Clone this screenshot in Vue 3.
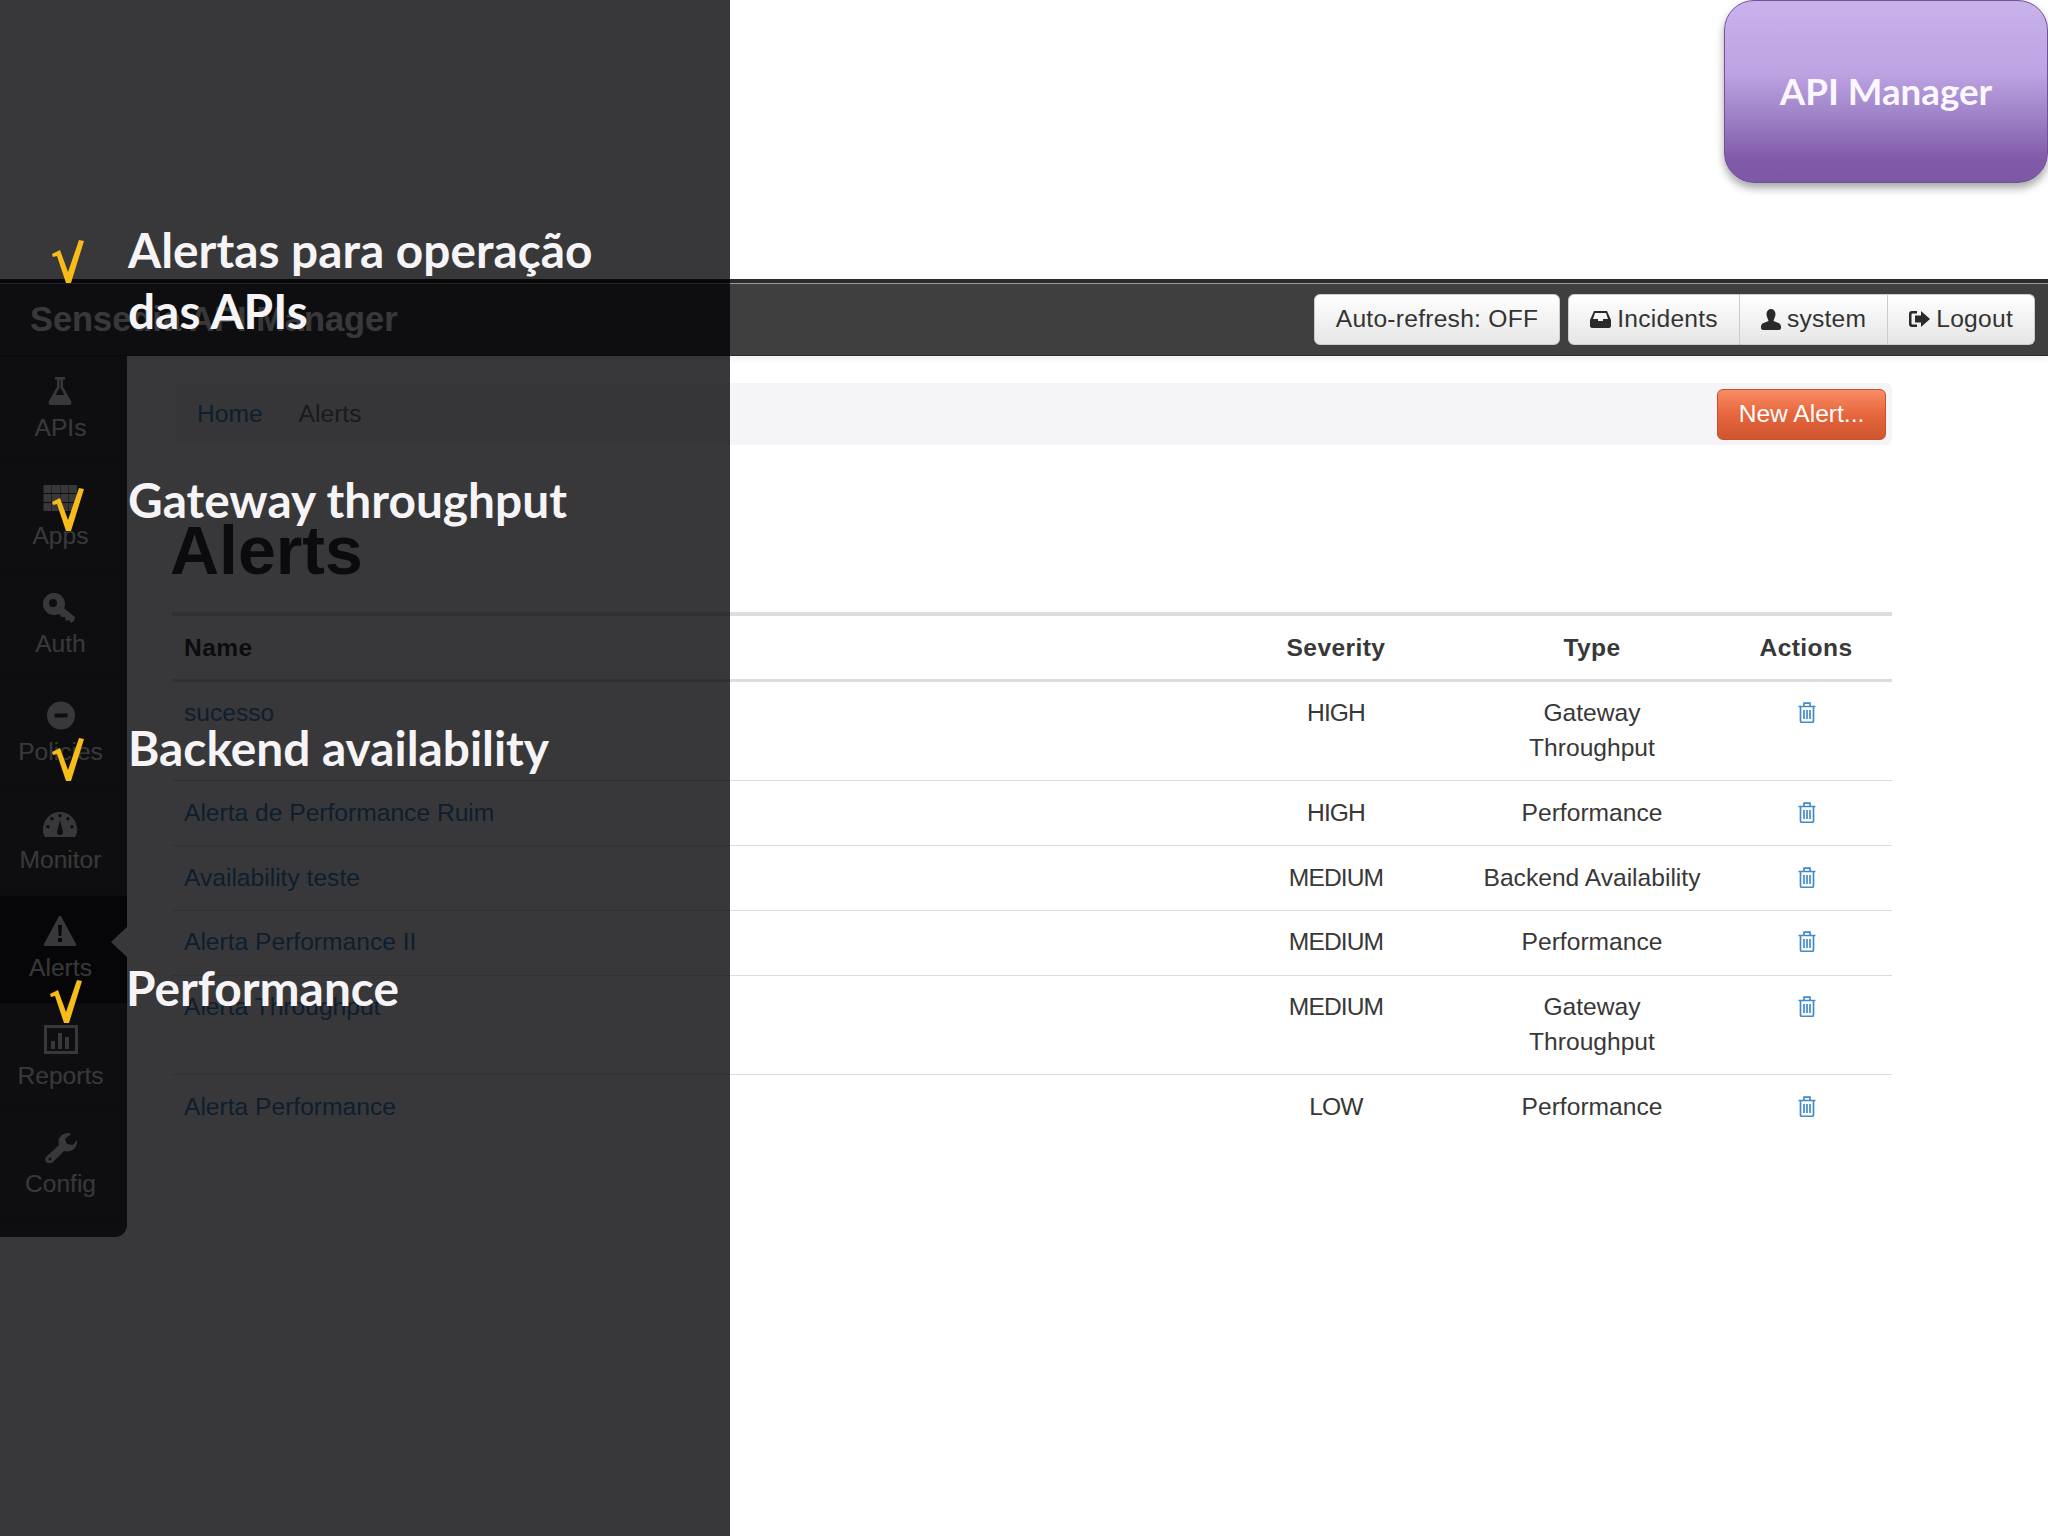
<script setup>
const icons = {
  flask: 'M12 1h10v2.500h-2V11l8 14c1 2 0 4-2 4H8c-2 0-3-2-2-4l8-14V3.500h-2z M16.500 3.500V12l-4 7h9l-4-7V3.500z',
  grid: 'M.5 1h8v8h-8z M9 1h8v8H9z M17.500 1h8v8h-8z M26 1h8v8h-8z M.5 10h8v8h-8z M9 10h8v8H9z M17.500 10h8v8h-8z M26 10h8v8h-8z M.5 19h8v8h-8z M9 19h8v8H9z M17.500 19h8v8h-8z M26 19h8v8h-8z',
  key: 'M11 1a11 11 0 1 1 0 22a11 11 0 1 1 0-22z M10 7a4 4 0 1 0 0 8a4 4 0 1 0 0-8z M18 14l14 11-1 4-3 2-2-3-3 1-1-4-3 0-5-5z',
  minus: 'M18 1.500a14 14 0 1 1 0 28a14 14 0 1 1 0-28z M11.500 13.500h13v4h-13z',
  gauge: 'M17 4C8 4 0 11 0 22c0 3 .5 5 2 7h30c1.500-2 2-4 2-7C34 11 26 4 17 4z M17 6a1.800 1.800 0 1 0 0 3.600a1.800 1.800 0 1 0 0-3.600z M9 9a1.800 1.800 0 1 0 0 3.600a1.800 1.800 0 1 0 0-3.600z M25 9a1.800 1.800 0 1 0 0 3.600a1.800 1.800 0 1 0 0-3.600z M5 17a1.800 1.800 0 1 0 0 3.600a1.800 1.800 0 1 0 0-3.600z M29 17a1.800 1.800 0 1 0 0 3.600a1.800 1.800 0 1 0 0-3.600z M14 24l3-12 3 12a3 3 0 1 1-6 0z',
  warning: 'M17 0c.7 0 1.300.6 2 2l14 26c.5 1 0 2-1 2H2c-1 0-1.500-1-1-2L15 2c.7-1.400 1.300-2 2-2z M15 9h4l-.7 11h-2.600z M15 22h4v4h-4z',
  chart: 'M1 1h34v29H1z M4 4v23h28V4z M8 17h4v8H8z M15 9h4v16h-4z M22 13h4v12h-4z',
  wrench: 'M3 25L16 13C14 7 18 1 26 1l2 1-6 5 2 5 6 1 4-5c1 8-6 13-13 11L9 31c-2 1-5 0-6-1s-1-4 0-5z M7 25.500a1.500 1.500 0 1 0 0 3a1.500 1.500 0 1 0 0-3z',
}

const menu = [
  { label: 'APIs', icon: 'flask' },
  { label: 'Apps', icon: 'grid' },
  { label: 'Auth', icon: 'key', rule: 'nonzero' },
  { label: 'Policies', icon: 'minus' },
  { label: 'Monitor', icon: 'gauge' },
  { label: 'Alerts', icon: 'warning', active: true },
  { label: 'Reports', icon: 'chart' },
  { label: 'Config', icon: 'wrench' },
]

const alerts = [
  { name: 'sucesso', severity: 'HIGH', type: 'Gateway\nThroughput' },
  { name: 'Alerta de Performance Ruim', severity: 'HIGH', type: 'Performance' },
  { name: 'Availability teste', severity: 'MEDIUM', type: 'Backend Availability' },
  { name: 'Alerta Performance II', severity: 'MEDIUM', type: 'Performance' },
  { name: 'Alerta Throughput', severity: 'MEDIUM', type: 'Gateway\nThroughput' },
  { name: 'Alerta Performance', severity: 'LOW', type: 'Performance' },
]

const notes = [
  { text: 'Alertas para operação\ndas APIs', cls: 'n1' },
  { text: 'Gateway throughput', cls: 'n2' },
  { text: 'Backend availability', cls: 'n3' },
  { text: 'Performance', cls: 'n4' },
]
</script>

<template>
  <div class="page">
    <div class="top">
      <div class="badge">API Manager</div>
    </div>

    <header class="navbar">
      <span class="brand">Sensedia API Manager</span>
      <div class="nav-actions">
        <button class="btn">Auto-refresh: OFF</button>
        <div class="btn-group">
          <button class="btn">
            <svg width="21" height="17" viewBox="0 0 21 17"><path fill-rule="evenodd" d="M4 0h13l4 9v6c0 1-1 2-2 2H2c-1 0-2-1-2-2V9z M5 2L3 8h5v2h5V8h5l-2-6z" /></svg>
            Incidents
          </button>
          <button class="btn">
            <svg width="20" height="21" viewBox="0 0 20 21"><path d="M10 0c2.500 0 4.500 2 4.500 5 0 2-1 4-1.500 5.500l-.5 1.500 5 2c1.500.6 2.500 2 2.500 3.500V19c0 1-1 2-2 2H2c-1 0-2-1-2-2v-1.500c0-1.500 1-2.900 2.500-3.500l5-2-.5-1.500C6.500 9 5.500 7 5.500 5c0-3 2-5 4.500-5z" /></svg>
            system
          </button>
          <button class="btn">
            <svg width="21" height="16" viewBox="0 0 21 16"><path d="M0 3a3 3 0 0 1 3-3h5v2.500H3.500a1 1 0 0 0-1 1v9a1 1 0 0 0 1 1H8V16H3a3 3 0 0 1-3-3z M6 4.500h6V0l9 8-9 8v-4.500H6z" /></svg>
            Logout
          </button>
        </div>
      </div>
    </header>

    <div class="body">
      <aside class="sidebar">
        <a v-for="item in menu" :key="item.label" class="side-item" :class="{ active: item.active }">
          <svg class="side-icon" width="36" height="31" viewBox="0 0 36 31">
            <path :fill-rule="item.rule || 'evenodd'" :d="icons[item.icon]" />
          </svg>
          <span>{{ item.label }}</span>
        </a>
      </aside>

      <main class="content">
        <div class="breadcrumb">
          <div class="crumbs">
            <a class="link">Home</a>
            <span class="crumb-current">Alerts</span>
          </div>
          <button class="btn-new">New Alert...</button>
        </div>

        <h1>Alerts</h1>

        <table>
          <colgroup>
            <col />
            <col class="col-mid" />
            <col class="col-mid" />
            <col class="col-act" />
          </colgroup>
          <thead>
            <tr>
              <th class="left">Name</th>
              <th>Severity</th>
              <th>Type</th>
              <th>Actions</th>
            </tr>
          </thead>
          <tbody>
            <tr v-for="row in alerts" :key="row.name">
              <td class="left"><a class="link">{{ row.name }}</a></td>
              <td class="severity">{{ row.severity }}</td>
              <td class="type">{{ row.type }}</td>
              <td>
                <svg class="trash" width="18" height="21" viewBox="0 0 18 21">
                  <path d="M.5 4.500h17 M6 4V1.200h6V4 M2.500 5v14c0 .8.6 1.300 1.300 1.300h10.400c.7 0 1.300-.5 1.300-1.300V5 M6 8v9 M9 8v9 M12 8v9" />
                </svg>
              </td>
            </tr>
          </tbody>
        </table>
      </main>
    </div>

    <!-- dark slide panel that sits over the left part of the screenshot -->
    <div class="overlay">
      <div v-for="note in notes" :key="note.cls" class="note" :class="note.cls">
        <svg class="check" width="32" height="43" viewBox="0 0 32 43">
          <polygon points="0,14 8,10 16,32 27,0 32,1 19,43 14,43 5,16 1,17" />
        </svg>
        <div class="note-text">{{ note.text }}</div>
      </div>
    </div>
  </div>
</template>

<style>
html,
body {
  margin: 0;
  background: #fff;
}
</style>

<style scoped>
.page {
  position: relative;
  width: 2048px;
  height: 1536px;
  overflow: hidden;
  background: #fff;
  color: #383838;
  font-family: "Liberation Sans", Arial, sans-serif;
  font-size: 24.6px;
  line-height: 34.8px;
}

.top {
  height: 279px;
  display: flex;
  justify-content: flex-end;
  align-items: flex-start;
}

.badge {
  width: 324px;
  height: 183px;
  box-sizing: border-box;
  display: flex;
  align-items: center;
  justify-content: center;
  padding-bottom: 1px;
  border: 1.5px solid #6f5397;
  border-radius: 30px;
  background: linear-gradient(#c9b2ec 0%, #bda3e2 40%, #9b80c5 65%, #8159a9 88%, #7d58a5 100%);
  box-shadow: 0 5px 8px rgba(0, 0, 0, 0.35);
  color: #fbf7ff;
  font-family: Lato, sans-serif;
  font-size: 36.700px;
  font-weight: 700;
}

.navbar {
  height: 72px;
  border-top: 4px solid #2b2b2b;
  border-bottom: 1px solid #2b2b2b;
  box-shadow: inset 0 1px 0 #999, 0 4px 6px rgba(0, 0, 0, 0.05);
  background: #3f3f3f;
  display: flex;
  align-items: center;
  justify-content: space-between;
  padding: 0 13px 0 30px;
}

.brand {
  color: #fff;
  font-size: 34.4px;
  font-weight: 700;
}

.nav-actions {
  display: flex;
  gap: 8px;
}

.btn-group {
  display: flex;
}

.btn {
  height: 51px;
  box-sizing: border-box;
  display: inline-flex;
  align-items: center;
  gap: 6px;
  padding: 0 21px;
  border: 1px solid #ccc;
  border-radius: 6px;
  background: linear-gradient(#fff, #e6e6e6);
  color: #333;
  font: inherit;
  letter-spacing: 0.25px;
}

.btn svg {
  fill: #2a2a2a;
}

.btn-group .btn {
  border-radius: 0;
  border-left-width: 0;
}

.btn-group .btn:first-child {
  border-left-width: 1px;
  border-radius: 6px 0 0 6px;
}

.btn-group .btn:last-child {
  border-radius: 0 6px 6px 0;
}

.body {
  display: flex;
  align-items: flex-start;
}

.sidebar {
  width: 127px;
  flex: none;
  padding-bottom: 17px;
  border-radius: 0 0 12px 0;
  background: #3f3f3f;
}

.side-item {
  position: relative;
  height: 108px;
  box-sizing: border-box;
  display: flex;
  flex-direction: column;
  align-items: center;
  padding: 20px 6px 0 0;
  border-bottom: 1px solid #383838;
  color: #fff;
}

.side-item span {
  margin-top: 4px;
}

.side-icon {
  fill: #fff;
}

.side-item.active {
  background: #1e1e1e;
}

/* little notch pointing at the page */
.side-item.active::after {
  content: "";
  position: absolute;
  right: 0;
  top: 31px;
  border: 15px solid transparent;
  border-left-width: 0;
  border-right: 16px solid #fff;
}

.content {
  flex: 1;
  padding: 27px 156px 0 45px;
}

.breadcrumb {
  height: 62px;
  display: flex;
  align-items: center;
  justify-content: space-between;
  margin-left: 3px;
  padding: 0 6px 0 22px;
  border-radius: 6px;
  background: #f5f5f7;
}

.crumbs {
  display: flex;
  gap: 36px;
}

.crumb-current {
  color: #777;
}

.link {
  color: #428bca;
}

.btn-new {
  width: 169px;
  height: 51px;
  padding: 0;
  border: 1px solid #c9502a;
  border-radius: 6px;
  background: linear-gradient(#f98d65, #e7653c 50%, #cf5630);
  color: #fff;
  font: inherit;
}

h1 {
  margin: 0 0 0 -2px;
  height: 167px;
  box-sizing: border-box;
  padding-top: 70px;
  color: #333;
  font-size: 68px;
  line-height: 70px;
  font-weight: 700;
}

table {
  width: 100%;
  table-layout: fixed;
  border-collapse: separate;
  border-spacing: 0;
  border-top: 4px solid #ddd;
}

.col-mid {
  width: 256px;
}

.col-act {
  width: 172px;
}

th,
td {
  padding: 14.5px 14px;
  text-align: center;
  vertical-align: top;
}

th {
  padding-bottom: 13.5px;
  border-bottom: 3px solid #ddd;
  letter-spacing: 0.4px;
}

td {
  border-bottom: 1px solid #ddd;
}

tbody tr:last-child td {
  border-bottom: none;
}

th.left,
td.left {
  padding-left: 12px;
  text-align: left;
}

.severity {
  letter-spacing: -0.9px;
}

.type {
  white-space: pre-line;
}

.trash {
  display: block;
  margin: 6px auto 0;
  position: relative;
  left: 1px;
  fill: none;
  stroke: #428bca;
  stroke-width: 1.7;
}

.overlay {
  position: absolute;
  left: 0;
  top: 0;
  width: 730px;
  height: 100%;
  box-sizing: border-box;
  padding: 219px 0 0 52px;
  background: rgba(0, 0, 2, 0.78);
}

.note {
  display: flex;
  align-items: flex-start;
}

.n2 {
  margin-top: 128px;
}

.n3 {
  margin-top: 186px;
}

.n4 {
  margin-top: 176px;
  margin-left: -2px;
}

.check {
  flex: none;
  margin: 21px 44px 0 0;
  fill: #f6bc1a;
}

.n2 .check {
  margin-top: 19px;
}

.n4 .check {
  margin-top: 23px;
}

.note-text {
  color: #f6f4f6;
  font-family: Lato, sans-serif;
  font-size: 47.8px;
  font-weight: 700;
  line-height: 61px;
  white-space: pre-line;
}
</style>
